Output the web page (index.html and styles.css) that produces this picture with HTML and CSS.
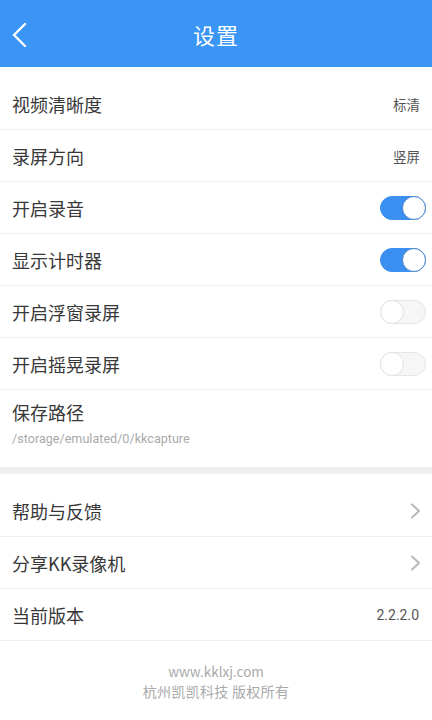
FILE: index.html
```html
<!DOCTYPE html>
<html lang="zh">
<head>
<meta charset="utf-8">
<link rel="stylesheet" href="styles.css">
</head>
<body>
<div class="header">
  <svg class="back" width="16" height="24" viewBox="0 0 16 24"><path d="M14 1 L3 12 L14 23" fill="none" stroke="#fff" stroke-width="2.4" stroke-linecap="round" stroke-linejoin="round"/></svg>
  <div class="title">设置</div>
</div>
<div class="section">
  <div class="row"><span class="label">视频清晰度</span><span class="value">标清</span></div>
  <div class="row"><span class="label">录屏方向</span><span class="value">竖屏</span></div>
  <div class="row"><span class="label">开启录音</span><span class="toggle on"><span class="knob"></span></span></div>
  <div class="row"><span class="label">显示计时器</span><span class="toggle on"><span class="knob"></span></span></div>
  <div class="row"><span class="label">开启浮窗录屏</span><span class="toggle"><span class="knob"></span></span></div>
  <div class="row"><span class="label">开启摇晃录屏</span><span class="toggle"><span class="knob"></span></span></div>
  <div class="pathrow"><div class="label">保存路径</div><div class="path">/storage/emulated/0/kkcapture</div></div>
</div>
<div class="band"></div>
<div class="section">
  <div class="row"><span class="label">帮助与反馈</span><svg class="chev" width="11" height="16" viewBox="0 0 11 16"><path d="M2 1.5 L9 8 L2 14.5" fill="none" stroke="#b8b8b8" stroke-width="2" stroke-linecap="round" stroke-linejoin="round"/></svg></div>
  <div class="row"><span class="label">分享KK录像机</span><svg class="chev" width="11" height="16" viewBox="0 0 11 16"><path d="M2 1.5 L9 8 L2 14.5" fill="none" stroke="#b8b8b8" stroke-width="2" stroke-linecap="round" stroke-linejoin="round"/></svg></div>
  <div class="row"><span class="label">当前版本</span><span class="value ver">2.2.2.0</span></div>
</div>
<div class="footer">
  <div class="site">www.kklxj.com</div>
  <div class="copy">杭州凯凯科技 版权所有</div>
</div>
</body>
</html>
```
FILE: styles.css
```css
* { box-sizing: border-box; }
body {
  margin: 0;
  background: #fff;
  font-family: "Noto Sans CJK SC", "Noto Sans", sans-serif;
  width: 432px;
  height: 720px;
  overflow: hidden;
}
.header {
  height: 67px;
  background: #3a95f7;
  display: flex;
  align-items: center;
  justify-content: center;
  position: relative;
}
.back {
  position: absolute;
  left: 11px;
  top: 23px;
}
.title {
  color: #fff;
  font-size: 22px;
  letter-spacing: 1px;
}
.section {
  padding-top: 11px;
}
.row {
  height: 52px;
  border-bottom: 1px solid #efefef;
  display: flex;
  align-items: center;
  justify-content: space-between;
  padding: 0 6px 0 12px;
}
.label {
  font-size: 18px;
  color: #383838;
}
.value {
  font-size: 13.5px;
  color: #555;
  padding-right: 6px;
}
.value.ver {
  font-family: "Roboto", "Noto Sans", sans-serif;
  font-size: 14px;
  padding-right: 7px;
}
.toggle {
  width: 46px;
  height: 24px;
  border-radius: 12px;
  background: #f6f6f6;
  border: 1px solid #e6e6e6;
  position: relative;
}
.toggle .knob {
  position: absolute;
  left: -1px;
  top: -1px;
  width: 24px;
  height: 24px;
  border-radius: 50%;
  background: #fff;
  border: 1px solid #e2e2e2;
}
.toggle.on {
  background: #3a8ff1;
  border-color: #3a8ff1;
}
.toggle.on .knob {
  left: auto;
  right: -1px;
  border-color: #4e87c7;
}
.pathrow {
  height: 77px;
  padding: 9px 12px 0;
}
.path {
  font-family: "Roboto", "Noto Sans", sans-serif;
  font-size: 12.6px;
  color: #aaa;
  margin-top: 6px;
}
.band {
  height: 7px;
  background: #f0f0f0;
}
.chev {
  margin-right: 5px;
}
.footer {
  padding-top: 21px;
  text-align: center;
  color: #aaa;
}
.site {
  font-size: 13.5px;
  line-height: 19px;
}
.copy {
  font-size: 14px;
  line-height: 20px;
  letter-spacing: 0.3px;
}
```
